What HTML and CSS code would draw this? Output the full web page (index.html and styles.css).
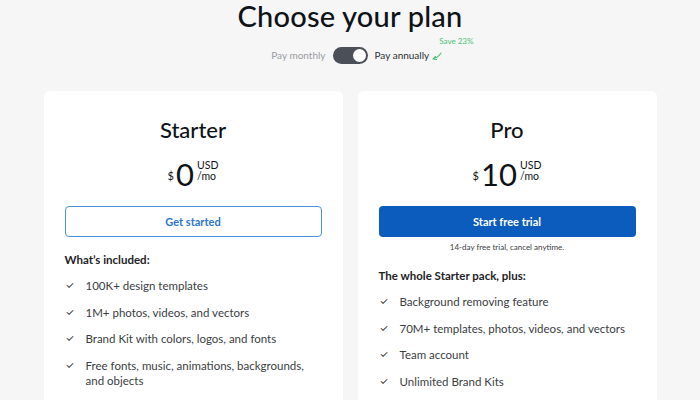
FILE: index.html
```html
<!DOCTYPE html>
<html>
<head>
<meta charset="utf-8">
<link rel="stylesheet" href="styles.css">
</head>
<body>
<div class="page">
  <h1 class="title">Choose your plan</h1>
  <div class="billing">
    <div class="side left"><span class="opt muted">Pay monthly</span></div>
    <span class="switch"><span class="knob"></span></span>
    <div class="side right">
      <span class="opt">Pay annually</span>
      <span class="save">
        <svg class="arrow" width="10" height="8" viewBox="0 0 10 8"><path d="M9 1 C7 4 5 6 1 7 M1 7 L3.5 4.5 M1 7 L4.5 7.5" fill="none" stroke="#4cc07a" stroke-width="1.1" stroke-linecap="round"/></svg>
        <span class="save-text">Save 23%</span>
      </span>
    </div>
  </div>
  <div class="cards">
    <div class="card">
      <h2 class="plan">Starter</h2>
      <div class="price">
        <span class="cur">$</span><span class="amount">0</span><span class="unit">USD<br>/mo</span>
      </div>
      <button class="btn btn-outline">Get started</button>
      <h3 class="inc">What’s included:</h3>
      <ul class="features">
        <li><span class="check">✓</span><span>100K+ design templates</span></li>
        <li><span class="check">✓</span><span>1M+ photos, videos, and vectors</span></li>
        <li><span class="check">✓</span><span>Brand Kit with colors, logos, and fonts</span></li>
        <li><span class="check">✓</span><span>Free fonts, music, animations, backgrounds, and objects</span></li>
      </ul>
    </div>
    <div class="card">
      <h2 class="plan">Pro</h2>
      <div class="price">
        <span class="cur">$</span><span class="amount">10</span><span class="unit">USD<br>/mo</span>
      </div>
      <button class="btn btn-solid">Start free trial</button>
      <p class="note">14-day free trial, cancel anytime.</p>
      <h3 class="inc inc-pro">The whole Starter pack, plus:</h3>
      <ul class="features">
        <li><span class="check">✓</span><span>Background removing feature</span></li>
        <li><span class="check">✓</span><span>70M+ templates, photos, videos, and vectors</span></li>
        <li><span class="check">✓</span><span>Team account</span></li>
        <li><span class="check">✓</span><span>Unlimited Brand Kits</span></li>
      </ul>
    </div>
  </div>
</div>
</body>
</html>
```

FILE: styles.css
```css
* { box-sizing: border-box; }
html, body {
  margin: 0;
  padding: 0;
  background: #f6f6f6;
  font-family: "Lato", "Inter", sans-serif;
  color: #0e1318;
  overflow: hidden;
}
.page {
  display: flex;
  flex-direction: column;
  align-items: center;
  height: 400px;
}
.title {
  margin: 0;
  font-size: 29px;
  font-weight: 500;
  line-height: 32px;
  letter-spacing: 0.2px;
  color: #0e1318;
}
.billing {
  display: grid;
  grid-template-columns: 1fr auto 1fr;
  align-items: center;
  width: 100%;
  margin-top: 14px;
  height: 18px;
  font-size: 10px;
}
.side { display: flex; align-items: center; }
.side.left { justify-content: flex-end; }
.side.right { justify-content: flex-start; }
.opt { color: #2d3035; }
.opt.muted { color: #9a9ca1; }
.switch {
  width: 35px;
  height: 17px;
  background: #4b4f57;
  border-radius: 9px;
  margin: 0 7px;
  display: flex;
  align-items: center;
  justify-content: flex-end;
  padding: 2px;
}
.knob {
  width: 13px;
  height: 13px;
  border-radius: 50%;
  background: #fff;
}
.save {
  position: relative;
  width: 46px;
  height: 18px;
}
.arrow {
  position: absolute;
  left: 3px;
  top: 6px;
}
.save-text {
  position: absolute;
  left: 10px;
  top: -10px;
  font-size: 8px;
  color: #4cc07a;
  white-space: nowrap;
}
.cards {
  display: flex;
  gap: 15px;
  margin-top: 27px;
}
.card {
  width: 299px;
  height: 309px;
  background: #fff;
  border-radius: 6px 6px 0 0;
  padding: 24px 21px 0;
  display: flex;
  flex-direction: column;
  overflow: hidden;
}
.plan {
  margin: 0;
  text-align: center;
  font-size: 22px;
  font-weight: 500;
  line-height: 30px;
}
.price {
  display: flex;
  justify-content: center;
  align-items: flex-start;
  margin-top: 14px;
  height: 30px;
}
.cur {
  font-size: 11px;
  margin-top: 10px;
  margin-right: 2px;
}
.amount {
  font-size: 31px;
  line-height: 30px;
  font-weight: 400;
}
.unit {
  font-size: 10.5px;
  line-height: 11px;
  margin-left: 3px;
  margin-top: 1px;
}
.btn {
  margin-top: 17px;
  height: 31px;
  width: 100%;
  flex: none;
  border-radius: 4px;
  font-family: inherit;
  font-size: 11px;
  font-weight: 700;
  cursor: pointer;
}
.btn-outline {
  background: #fff;
  border: 1px solid #4a90de;
  color: #2c76cc;
}
.btn-solid {
  background: #0b5cbd;
  border: none;
  color: #fff;
}
.note {
  margin: 5px 0 0;
  text-align: center;
  font-size: 8px;
  color: #3a3d42;
}
.inc {
  margin: 16px 0 0;
  font-size: 11.5px;
  font-weight: 700;
  color: #1e2226;
}
.inc-pro { margin-top: 17px; }
.features {
  list-style: none;
  margin: 6px 0 0;
  padding: 0;
}
.features li {
  display: flex;
  align-items: flex-start;
  font-size: 11.5px;
  line-height: 15px;
  color: #3a3d42;
  padding: 6px 0 5.5px;
}
.check {
  width: 21px;
  flex: none;
  padding-left: 1px;
  font-size: 10px;
  color: #1e2226;
}
```
